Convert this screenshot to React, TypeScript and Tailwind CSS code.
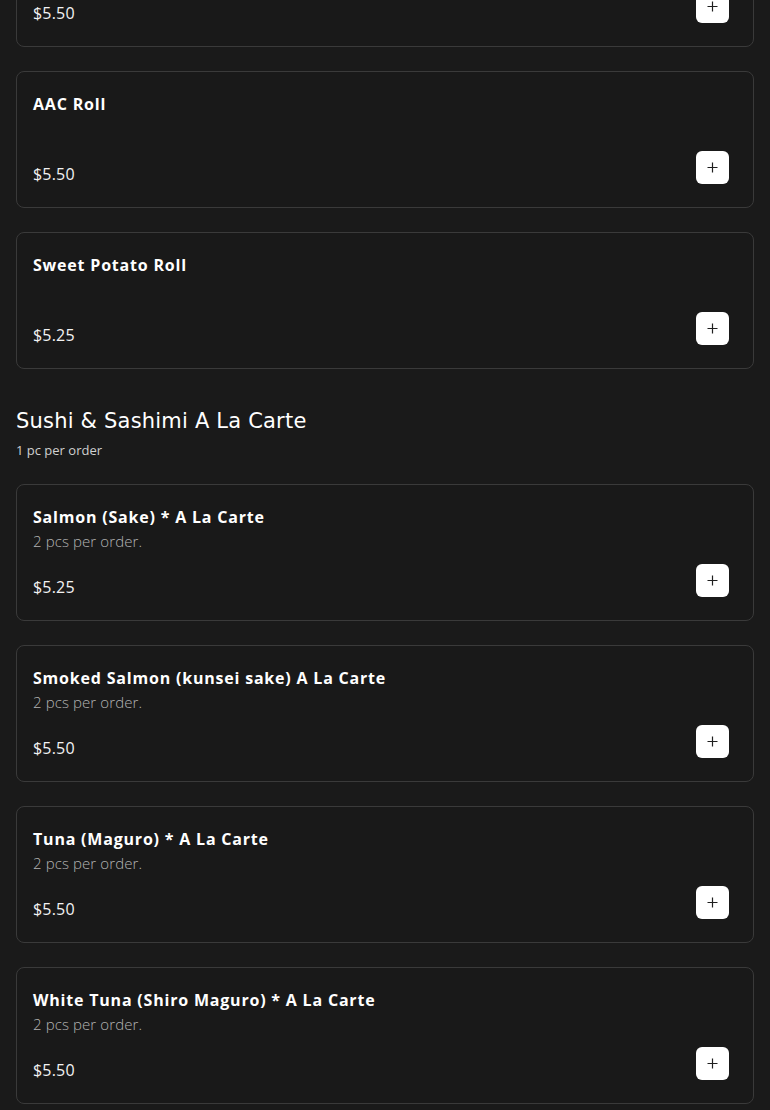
import React from "react";

type Item = { name: string; desc?: string; price: string };

const PlusIcon = () => (
  <svg width="11" height="11" viewBox="0 0 11 11" fill="none">
    <path d="M5.5 0.5V10.5M0.5 5.5H10.5" stroke="#1f1f1f" strokeWidth="1.2" />
  </svg>
);

const Card = ({ item }: { item: Item }) => (
  <div className="h-[137px] rounded-lg border border-[#3a3a3a] bg-[#191919] pl-4 pr-6 pt-[18px] pb-[23px] flex flex-col justify-between">
    <div>
      <div className="text-[16px] leading-[28px] font-bold text-white font-['Open_Sans',sans-serif] tracking-[0.8px]">
        {item.name}
      </div>
      {item.desc && (
        <div className="text-[15px] leading-[20px] font-light text-[#b3b3b3] font-['Open_Sans',sans-serif] tracking-[0.1px]">
          {item.desc}
        </div>
      )}
    </div>
    <div className="flex items-end justify-between">
      <div className="text-[16px] leading-[20px] text-[#f2f2f2] font-['Open_Sans',sans-serif] tracking-[0.2px]">
        {item.price}
      </div>
      <button className="w-[33px] h-[33px] rounded-md bg-white flex items-center justify-center">
        <PlusIcon />
      </button>
    </div>
  </div>
);

export default function App() {
  const rolls: Item[] = [
    { name: "Cucumber Roll", price: "$5.50" },
    { name: "AAC Roll", price: "$5.50" },
    { name: "Sweet Potato Roll", price: "$5.25" },
  ];
  const sushi: Item[] = [
    { name: "Salmon (Sake) * A La Carte", desc: "2 pcs per order.", price: "$5.25" },
    { name: "Smoked Salmon (kunsei sake) A La Carte", desc: "2 pcs per order.", price: "$5.50" },
    { name: "Tuna (Maguro) * A La Carte", desc: "2 pcs per order.", price: "$5.50" },
    { name: "White Tuna (Shiro Maguro) * A La Carte", desc: "2 pcs per order.", price: "$5.50" },
  ];
  return (
    <div className="h-[1110px] overflow-hidden bg-[#1a1a1a] px-4">
      <div className="flex flex-col gap-6 -mt-[90px]">
        {rolls.map((it) => (
          <Card key={it.name} item={it} />
        ))}
      </div>
      <div className="mt-[38px]">
        <h2 className="text-[21px] leading-[28px] text-white font-['DejaVu_Sans',sans-serif] tracking-[0.2px]">
          Sushi &amp; Sashimi A La Carte
        </h2>
        <p className="mt-[6px] text-[13px] leading-[18px] font-medium text-[#d0d0d0] font-['Open_Sans',sans-serif]">
          1 pc per order
        </p>
      </div>
      <div className="flex flex-col gap-6 mt-[25px]">
        {sushi.map((it) => (
          <Card key={it.name} item={it} />
        ))}
      </div>
    </div>
  );
}
